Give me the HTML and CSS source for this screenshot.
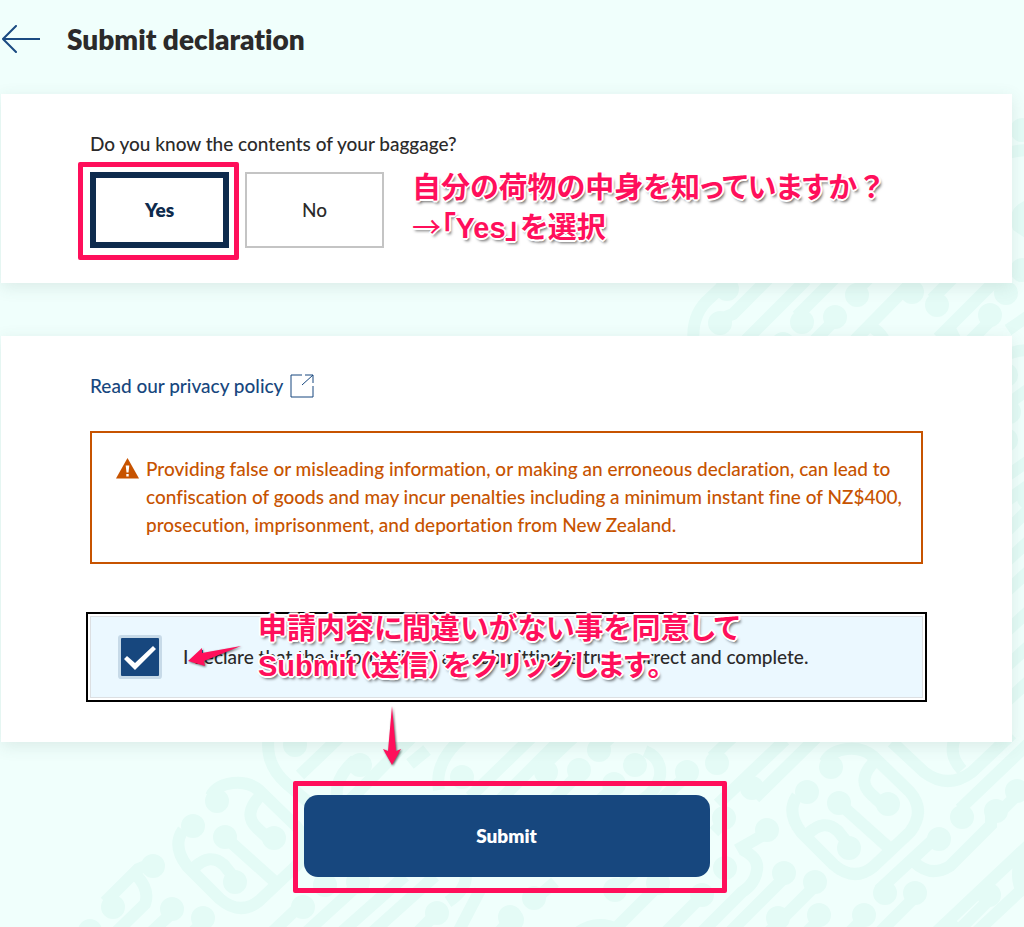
FILE: index.html
```html
<!DOCTYPE html>
<html lang="en">
    <head>
        <meta charset="UTF-8" />
        <meta name="viewport" content="width=device-width, initial-scale=1.0" />
        <title>Submit declaration</title>
        <link rel="stylesheet" href="styles.css">
    </head>
    <body>
        <!-- background pattern -->
        <svg class="pattern" viewBox="0 0 1024 927" preserveAspectRatio="xMaxYMin slice" aria-hidden="true">
            <defs>
                <g id="koru">
                    <path d="M825 762C832 747 860 744 874 757L910 792Q926 811 910 832L873 867Q854 882 834 865L801 832Q786 812 797 796" />
                    <path d="M875 761Q856 780 871 794L884 806" />
                    <path d="M839 803L888 847" />
                    <path d="M808 834Q824 818 838 831L850 846" />
                    <path class="dots" d="M831 767h0M807 792h0M839 803h0M888 804h0M849 848h0" />
                </g>
            </defs>
            <use href="#koru" />
            <use href="#koru" x="-614" y="34" />
            <!-- between the cards -->
            <path d="M694 345Q690 315 710 298L730 279M720 319L733 314L768 279M746 340L806 280M797 316L836 277M835 320L810 345M855 292L870 277M850 345L905 289L912 292M873 328Q886 336 886 350M932 299L954 277M938 338L1000 276M948 325L958 345M992 319L966 345" />
            <path class="dots" d="M727 289h0M720 323h0M802 322h0M835 317h0M857 295h0M912 292h0M937 305h0M990 315h0M783 344h0" />
            <!-- right edge -->
            <path d="M1008 153Q1018 150 1030 150M1030 205Q1012 212 1018 226L1030 234M1008 330L1030 315M1008 354Q1018 350 1030 350M1008 404L1030 388M1008 475L1030 460M1008 500L1030 484M1008 530L1030 508M1008 560L1030 540M1008 590L1030 570M1008 630L1030 610M1008 665L1030 645M1008 700L1030 680" />
            <path class="dots" d="M1022 130h0M1024 216h0M1022 270h0M1006 293h0M1006 375h0M1009 412h0M1006 440h0M1029 498h0" />
            <!-- below the cards, left -->
            <path d="M269 735Q264 764 287 784L320 812M300 775L345 732M337 800Q334 778 355 760M350 800L415 734M439 790Q434 762 462 738M470 797L535 734M500 800L560 740M427 750L410 764" />
            <path d="M105 902L138 869L153 863M137 876Q150 890 145 904L110 938M172 913L145 938M203 922L187 938M303 903L266 938M358 885L300 938M405 876L335 938M435 876L366 938M466 876Q466 890 448 902M437 913L412 938M480 890L455 938M510 920L494 938" />
            <path class="dots" d="M113 907h0M153 866h0M172 909h0M203 918h0M90 931h0M303 907h0M325 885h0M358 882h0M437 913h0M510 917h0M360 765h0M295 745h0M462 777h0" />
            <!-- below the cards, right -->
            <path d="M540 769L575 736M579 774L545 808M599 748L612 736M645 751Q662 758 660 776Q657 790 642 800M614 787L600 800M687 776L656 804M712 757L736 734M755 798L820 734M718 804L785 740M724 822L714 832M767 833L737 850M743 850Q759 858 757 870Q755 884 742 892L696 938M700 898L660 938M658 886L606 938M615 890L635 872M534 900L555 882M575 935Q595 918 620 930M784 878L724 938M815 886L763 938M819 920L801 938M864 918L844 938" />
            <path d="M879 890L934 839M914 862Q931 878 950 866L991 825L991 812M915 897L874 938M960 809L1030 742M989 900L951 938M1017 795L1002 810M930 938L1034 840M970 938L1034 878M892 742L924 772Q948 790 972 772L1012 734M955 738Q948 755 962 770M1024 856Q1012 874 1024 896" />
            <path class="dots" d="M546 772h0M579 770h0M599 750h0M635 765h0M614 784h0M687 772h0M717 763h0M752 788h0M724 818h0M767 830h0M725 868h0M784 873h0M815 882h0M778 918h0M819 915h0M864 915h0M702 895h0M658 883h0M615 890h0M534 898h0M512 920h0M885 893h0M939 839h0M915 893h0M962 817h0M996 811h0M1017 791h0M989 895h0M950 931h0" />
        </svg>

        <main class="page">
            <header class="top">
                <a class="back" href="#" aria-label="Back">
                    <svg width="38" height="28" viewBox="0 0 38 28">
                        <path d="M14 1L1 14L14 27M1 14H38" />
                    </svg>
                </a>
                <h1>Submit declaration</h1>
            </header>

            <section class="card question">
                <p id="baggage">Do you know the contents of your baggage?</p>
                <div class="options" role="group" aria-labelledby="baggage">
                    <button type="button" class="option selected" aria-pressed="true">Yes</button>
                    <button type="button" class="option" aria-pressed="false">No</button>
                </div>
                <div class="note note-yes" lang="ja">自分の荷物の中身を知っていますか<span class="wide">？</span><br><span class="arrow">→</span>「Yes」を選択</div>
            </section>

            <section class="card">
                <a class="policy" href="#">
                    Read our privacy policy
                    <svg width="24" height="24" viewBox="0 0 24 24">
                        <path d="M12 1H1V23H23V12M12 11L23 1M15 1H23V9" />
                    </svg>
                </a>

                <div class="alert">
                    <svg width="23" height="21" viewBox="0 0 23 21">
                        <path d="M11.500 0L23 20.500H0Z" fill="#c75300" />
                        <path d="M9.700 7.500H13.300L12.500 14.500H10.500ZM10.300 16H12.700V18.400H10.300Z" fill="#fff" />
                    </svg>
                    <p>Providing false or misleading information, or making an erroneous declaration, can lead to confiscation of goods and may incur penalties including a minimum instant fine of NZ$400, prosecution, imprisonment, and deportation from New Zealand.</p>
                </div>

                <div class="declare">
                    <input type="checkbox" id="agree" checked />
                    <label for="agree">I declare that the information I am submitting is true, correct and complete.</label>
                    <svg class="pointer pointer-left" width="56" height="24" viewBox="0 0 56 24">
                        <path d="M1 17L15 4L15 9L54 2L17 17L18 22Z" />
                    </svg>
                    <div class="note note-submit" lang="ja">申請内容に間違いがない事を同意して<br>Submit（送信）をクリックします。</div>
                    <svg class="pointer pointer-down" width="20" height="62" viewBox="0 0 20 62">
                        <path d="M10 1L14 46L19 44L10 60L1 44L6 46Z" />
                    </svg>
                </div>
            </section>

            <div class="actions">
                <button type="submit" class="submit">Submit</button>
            </div>
        </main>
    </body>
</html>
```

FILE: styles.css
```css
* {
    box-sizing: border-box;
}
body {
    margin: 0;
    position: relative;
    min-height: 100vh;
    background: #f0fffc;
    color: #2b2a2a;
    font-family: Lato, "Noto Sans CJK JP", sans-serif;
    font-size: 19px;
    line-height: 28px;
    font-weight: 500;
    font-variant-ligatures: none;
    overflow-x: hidden;
}
h1,
p {
    margin: 0;
}
button {
    font: inherit;
    cursor: pointer;
}
.pattern {
    position: absolute;
    top: 0;
    left: 0;
    width: 100%;
    height: 100%;
    fill: none;
    stroke: #e4fbf6;
    stroke-width: 12;
}
.pattern .dots {
    stroke-width: 24;
    stroke-linecap: round;
}
.page {
    position: relative;
    padding: 0 12px 50px 1px;
}

/* header */
.top {
    display: flex;
    align-items: center;
    gap: 27px;
    height: 94px;
    padding: 0 0 16px 1px;
}
.back {
    display: flex;
}
.back svg {
    fill: none;
    stroke: #1b4b82;
    stroke-width: 2;
    stroke-linecap: round;
}
h1 {
    font-size: 28px;
    line-height: 36px;
    font-weight: 800;
}

/* cards */
.card {
    position: relative;
    margin-bottom: 53px;
    padding: 36px 89px 44px;
    background: #fff;
    box-shadow: 0 4px 16px rgba(60, 90, 80, 0.12);
}
.question {
    padding-bottom: 35px;
}
.options {
    display: flex;
    gap: 16px;
    margin-top: 14px;
}
.option {
    position: relative;
    width: 139px;
    height: 76px;
    padding: 0;
    border: 2px solid #c4c4c4;
    background: #fff;
    color: #2b2a2a;
}
.option.selected {
    border: 6px solid #0e2b4d;
    color: #0e2b4d;
    font-weight: 800;
}
.policy {
    display: inline-flex;
    align-items: center;
    gap: 7px;
    color: #17477e;
    text-decoration: none;
}
.policy svg {
    fill: none;
    stroke: #17477e;
}
.alert {
    display: flex;
    gap: 7px;
    margin-top: 31px;
    padding: 22px 12px 23px 24px;
    border: 2px solid #c75300;
    color: #c75300;
}
.alert svg {
    flex: none;
    margin-top: 3px;
}
.declare {
    position: relative;
    display: flex;
    align-items: center;
    gap: 24px;
    margin-top: 52px;
    padding: 0 30px;
    height: 82px;
    border: 1px solid #dcdfe2;
    background: #ebf8ff;
    outline: 2px solid #000;
    outline-offset: 2px;
}
.declare input {
    appearance: none;
    width: 38px;
    height: 38px;
    margin: 0;
    background: #17477e;
    border-radius: 1px;
    box-shadow: 0 0 0 3px #c7dae8;
}
.declare input:checked::before {
    content: "";
    display: block;
    width: 38px;
    height: 38px;
    background: #fff;
    clip-path: polygon(3px 21px, 6px 18px, 14px 25px, 32px 8px, 35px 11px, 14px 32px);
}

/* submit */
.actions {
    display: flex;
    justify-content: center;
}
.submit {
    position: relative;
    width: 406px;
    height: 82px;
    border: 0;
    border-radius: 14px;
    background: #17477e;
    color: #fff;
    font-weight: 800;
}

/* pink notes over the page */
.option.selected::after,
.submit::after {
    content: "";
    position: absolute;
    inset: -16px -16px -18px -18px;
    border: 5px solid #ff0f5b;
    border-radius: 2px;
}
.submit::after {
    inset: -14px -17px -16px -11px;
}
.note {
    position: absolute;
    color: #ff0f5b;
    font-family: "Liberation Sans", "Noto Sans CJK JP", sans-serif;
    font-feature-settings: "palt";
    font-size: 29px;
    line-height: 37px;
    font-weight: 700;
    white-space: nowrap;
    pointer-events: none;
    text-shadow: 1px 1px 0 #fff, -1px -1px 0 #fff, 1px -1px 0 #fff, -1px 1px 0 #fff,
        2px 0 0 #fff, -2px 0 0 #fff, 0 2px 0 #fff, 0 -2px 0 #fff, 2px 3px 3px rgba(0, 0, 0, 0.6);
}
.note .wide {
    font-feature-settings: normal;
}
.note .arrow {
    font-family: "Noto Sans CJK JP", sans-serif;
    font-weight: 400;
}
.note-yes {
    top: 76px;
    left: 411px;
}
.note-submit {
    top: -6px;
    left: 167px;
}
.pointer {
    position: absolute;
    fill: #ff0f5b;
    filter: drop-shadow(1px 1px 1px rgba(0, 0, 0, 0.6));
}
.pointer-left {
    top: 27px;
    left: 96px;
}
.pointer-down {
    top: 88px;
    left: 291px;
}
```
